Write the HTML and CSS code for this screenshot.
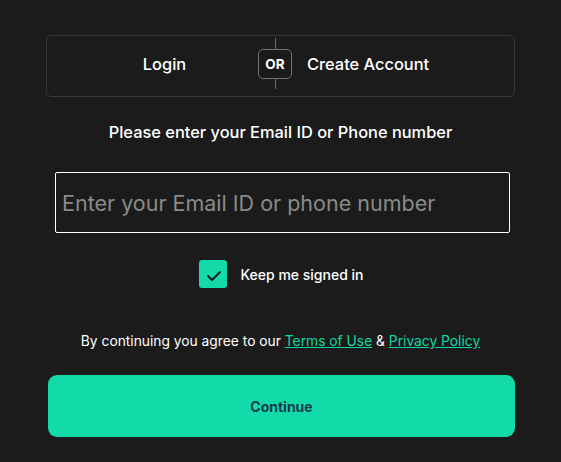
FILE: index.html
```html
<!DOCTYPE html>
<html>
<head>
<meta charset="utf-8">
<link rel="stylesheet" href="styles.css">
</head>
<body>
<div class="wrap">
  <div class="tabs">
    <div class="tab tab-left">Login</div>
    <div class="divider"><span class="or">OR</span></div>
    <div class="tab tab-right">Create Account</div>
  </div>
  <p class="heading">Please enter your Email ID or Phone number</p>
  <input class="field" type="text" placeholder="Enter your Email ID or phone number">
  <label class="keep">
    <span class="check">
      <svg width="28" height="28" viewBox="0 0 28 28"><path d="M9.2 16.2 L13 20 L20.8 12.2" fill="none" stroke="#0f1f1f" stroke-width="2.1" stroke-linecap="round" stroke-linejoin="round"/></svg>
    </span>
    <span>Keep me signed in</span>
  </label>
  <p class="terms">By continuing you agree to our <a href="#">Terms of Use</a> &amp; <a href="#">Privacy Policy</a></p>
  <button class="continue">Continue</button>
</div>
</body>
</html>
```
FILE: styles.css
```css
html, body {
  margin: 0;
  padding: 0;
  background: #1b1b1b;
  font-family: Inter, "Noto Sans", sans-serif;
  color: #ffffff;
}
.wrap {
  width: 469px;
  margin: 0 auto;
  padding-top: 35px;
  display: flex;
  flex-direction: column;
  align-items: center;
}
.tabs {
  width: 467px;
  height: 60px;
  box-sizing: content-box;
  border: 1px solid #383838;
  border-radius: 5px;
  display: flex;
  align-items: center;
}
.tabs > * {
  margin-bottom: 5px;
}
.tab {
  font-size: 16.4px;
  font-weight: 500;
}
.tab-left {
  width: 187px;
  padding-left: 24px;
  text-align: center;
}
.tab-right {
  flex: 1;
  padding-left: 15px;
}
.divider {
  width: 34px;
  height: 51px;
  position: relative;
  display: flex;
  align-items: center;
  justify-content: center;
}
.divider::before {
  content: "";
  position: absolute;
  left: 17px;
  top: 0;
  bottom: 0;
  width: 1px;
  background: #6a6a6a;
}
.or {
  position: relative;
  width: 34px;
  height: 30px;
  box-sizing: border-box;
  background: #1b1b1b;
  border: 1px solid #707070;
  border-radius: 5px;
  font-size: 13.5px;
  font-weight: 700;
  display: flex;
  align-items: center;
  justify-content: center;
}
.heading {
  margin: 25px 0 0;
  font-size: 16.4px;
  font-weight: 500;
  line-height: 20px;
}
.field {
  margin-top: 30px;
  margin-left: 4px;
  width: 455px;
  height: 61px;
  box-sizing: border-box;
  background: #1b1b1b;
  border: 1px solid #ffffff;
  border-radius: 2px;
  padding: 0 6px;
  font-family: Inter, "Noto Sans", sans-serif;
  font-size: 21.5px;
  color: #ffffff;
  outline: none;
}
.field::placeholder {
  color: #8a8a8a;
}
.keep {
  margin-top: 27px;
  display: flex;
  align-items: center;
  gap: 13px;
  font-size: 14px;
  font-weight: 500;
  margin-left: 2px;
}
.check {
  width: 28px;
  height: 28px;
  border-radius: 3px;
  background: #12dba9;
  display: flex;
}
.terms {
  margin: 44px 0 0;
  font-size: 13.8px;
  line-height: 18px;
}
.terms a {
  color: #12d6a4;
  text-decoration: underline;
}
.continue {
  margin-top: 25px;
  margin-left: 2px;
  width: 467px;
  height: 62px;
  border: none;
  border-radius: 9px;
  background: #12dba9;
  color: #163c4e;
  font-family: Inter, "Noto Sans", sans-serif;
  font-size: 14px;
  font-weight: 700;
}
```
